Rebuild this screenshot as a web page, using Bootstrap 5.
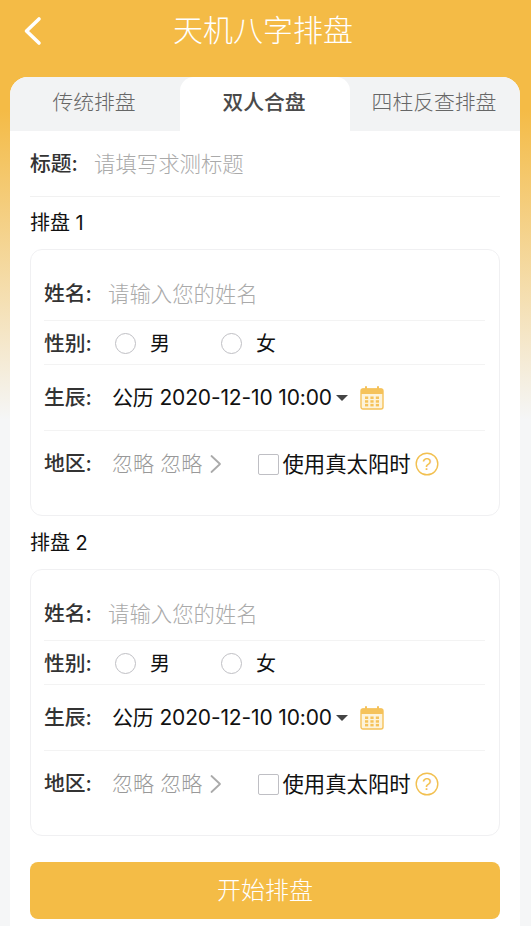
<!DOCTYPE html>
<html lang="zh"><head><meta charset="utf-8"><title>天机八字排盘</title>
<link rel="stylesheet" href="https://cdn.jsdelivr.net/npm/bootstrap@5.3.0/dist/css/bootstrap.min.css">
<style>
html,body{height:926px;overflow:hidden}
body{font-family:"Inter","Noto Sans CJK SC",sans-serif;color:#111;background:linear-gradient(180deg,#f4bb46 0,#f4bb46 110px,#f5f6f7 420px,#f5f6f7 100%)}
.top-bar{height:77px;padding:0 5px 18px 0;position:relative}
.top-bar h1{font-size:30px;font-weight:300;color:#fff;margin:0;line-height:1}
.back-ico{position:absolute;left:22px;top:16px}
.sheet{margin:0 11px 0 10px;background:#fff;border-radius:18px 18px 0 0;height:849px;overflow:hidden}
.tab-row{height:54px;background:#f2f3f4}
.tab-cell{flex:1 1 0;font-size:20.8px;font-weight:300;color:#666;line-height:52px;text-align:center;padding-right:2px}
.tab-cell.on{background:#fff;color:#4a4a4a;font-weight:500;border-radius:14px 14px 0 0}
.sheet-body{padding:0 20px}
.title-row{height:66px;border-bottom:1px solid #f1f1f1;font-size:20px}
.lbl{font-size:20.8px;font-weight:500;color:#333;flex:0 0 auto;white-space:nowrap;width:48px}
.txt-in{border:0;outline:0;padding:2px 0 0;background:transparent;font-size:21.4px;font-weight:300;color:#333;flex:1 1 auto;min-width:0}
.txt-in::placeholder{color:#aaa;opacity:1}
.sec-title{font-size:20px;color:#111;line-height:26px;margin:13px 0 13px;font-weight:400}
.sec-title.next{margin-top:14px}
.form-box{border:1px solid #f0f0f2;border-radius:12px;height:267px;padding:17px 14px 0 13px}
.r1{height:54px;border-bottom:1px solid #f3f3f3}
.r2{height:44px;border-bottom:1px solid #f3f3f3;padding-top:2px}
.r3{height:66px;border-bottom:1px solid #f3f3f3}
.r4{height:66px}
.gap-a{width:16px}
.gap-b{width:23px}
.gap-c{width:20px}
.form-box .form-check-input{margin:0;flex:0 0 auto;border:1.5px solid #bfbfc4;box-shadow:none}
.form-box .rad{width:21px;height:21px}
.rad-txt{font-size:20px;color:#111;margin-left:14px;width:71px;padding-top:1px}
.date-v{font-size:21px;color:#111;white-space:nowrap;letter-spacing:-.15px}
.caret-i{width:0;height:0;border:6px solid transparent;border-top:6px solid #444;border-bottom:0;margin-left:4px}
.cal-i{margin-left:12px}
.grey-v{font-size:21px;font-weight:300;color:#999;letter-spacing:.1px;white-space:nowrap}
.form-box .chk{width:21px;height:21px;border-radius:2px;margin-left:36px}
.sun-t{font-size:21.4px;font-weight:400;color:#111;white-space:nowrap;margin-left:3px}
.go-btn{display:block;width:100%;height:57px;margin-top:26px;border:0;border-radius:8px;background:#f4bc46;color:#fff;font-size:24px;font-weight:300;line-height:1}
.go-btn:hover,.go-btn:active{background:#f4bc46!important;color:#fff!important}
</style></head>
<body>
<header class="top-bar d-flex align-items-center justify-content-center">
<svg class="back-ico" width="20" height="30" viewBox="0 0 20 30" fill="none"><path d="M17 3 L4.5 15 L17 27" stroke="#fff" stroke-width="3.6" stroke-linecap="round" stroke-linejoin="round"/></svg>
<h1>天机八字排盘</h1>
</header>
<main class="sheet">
<div class="tab-row d-flex">
<div class="tab-cell">传统排盘</div>
<div class="tab-cell on">双人合盘</div>
<div class="tab-cell">四柱反查排盘</div>
</div>
<div class="sheet-body">
<div class="title-row d-flex align-items-center">
<span class="lbl">标题:</span><span class="gap-a"></span><input class="txt-in" type="text" placeholder="请填写求测标题">
</div>

<div class="sec-title">排盘 1</div>
<section class="form-box">
<div class="r1 d-flex align-items-center"><span class="lbl">姓名:</span><span class="gap-a"></span><input class="txt-in" type="text" placeholder="请输入您的姓名"></div>
<div class="r2 d-flex align-items-center"><span class="lbl">性别:</span><span class="gap-b"></span>
<input class="form-check-input rad" type="radio" name="a"><span class="rad-txt">男</span>
<input class="form-check-input rad" type="radio" name="a"><span class="rad-txt">女</span></div>
<div class="r3 d-flex align-items-center"><span class="lbl">生辰:</span><span class="gap-c"></span><span class="date-v">公历 2020-12-10 10:00</span><span class="caret-i"></span>
<svg class="cal-i" width="24" height="24" viewBox="0 0 24 24"><rect x="1" y="3" width="22" height="20" rx="2" fill="#fdf3da" stroke="#f5c25a" stroke-width="1.4"/><path d="M1 4.5a2 2 0 0 1 2-2h18a2 2 0 0 1 2 2V8H1z" fill="#f5c25a"/><path d="M6 1v4M18 1v4" stroke="#f5c25a" stroke-width="2" stroke-linecap="round"/><g fill="#f5c25a"><rect x="5" y="10.5" width="3.2" height="2.5"/><rect x="10.4" y="10.5" width="3.2" height="2.5"/><rect x="15.8" y="10.5" width="3.2" height="2.5"/><rect x="5" y="14.2" width="3.2" height="2.5"/><rect x="10.4" y="14.2" width="3.2" height="2.5"/><rect x="15.8" y="14.2" width="3.2" height="2.5"/><rect x="5" y="17.9" width="3.2" height="2.5"/><rect x="10.4" y="17.9" width="3.2" height="2.5"/><rect x="15.8" y="17.9" width="3.2" height="2.5"/></g></svg></div>
<div class="r4 d-flex align-items-center"><span class="lbl">地区:</span><span class="gap-c"></span><span class="grey-v">忽略 忽略</span>
<svg class="ms-2" width="12" height="20" viewBox="0 0 12 20" fill="none"><path d="M1.5 2 L10 10 L1.5 18" stroke="#aaa" stroke-width="1.8" stroke-linecap="round" stroke-linejoin="round"/></svg>
<input class="form-check-input chk" type="checkbox"><span class="sun-t">使用真太阳时</span>
<svg class="ms-1" width="24" height="24" viewBox="0 0 24 24" fill="none"><circle cx="12" cy="12" r="10.8" stroke="#f2c050" stroke-width="1.4"/><text x="12" y="18" text-anchor="middle" font-size="17" fill="#f2c050" font-family="Liberation Sans">?</text></svg></div>
</section>

<div class="sec-title next">排盘 2</div>
<section class="form-box">
<div class="r1 d-flex align-items-center"><span class="lbl">姓名:</span><span class="gap-a"></span><input class="txt-in" type="text" placeholder="请输入您的姓名"></div>
<div class="r2 d-flex align-items-center"><span class="lbl">性别:</span><span class="gap-b"></span>
<input class="form-check-input rad" type="radio" name="b"><span class="rad-txt">男</span>
<input class="form-check-input rad" type="radio" name="b"><span class="rad-txt">女</span></div>
<div class="r3 d-flex align-items-center"><span class="lbl">生辰:</span><span class="gap-c"></span><span class="date-v">公历 2020-12-10 10:00</span><span class="caret-i"></span>
<svg class="cal-i" width="24" height="24" viewBox="0 0 24 24"><rect x="1" y="3" width="22" height="20" rx="2" fill="#fdf3da" stroke="#f5c25a" stroke-width="1.4"/><path d="M1 4.5a2 2 0 0 1 2-2h18a2 2 0 0 1 2 2V8H1z" fill="#f5c25a"/><path d="M6 1v4M18 1v4" stroke="#f5c25a" stroke-width="2" stroke-linecap="round"/><g fill="#f5c25a"><rect x="5" y="10.5" width="3.2" height="2.5"/><rect x="10.4" y="10.5" width="3.2" height="2.5"/><rect x="15.8" y="10.5" width="3.2" height="2.5"/><rect x="5" y="14.2" width="3.2" height="2.5"/><rect x="10.4" y="14.2" width="3.2" height="2.5"/><rect x="15.8" y="14.2" width="3.2" height="2.5"/><rect x="5" y="17.9" width="3.2" height="2.5"/><rect x="10.4" y="17.9" width="3.2" height="2.5"/><rect x="15.8" y="17.9" width="3.2" height="2.5"/></g></svg></div>
<div class="r4 d-flex align-items-center"><span class="lbl">地区:</span><span class="gap-c"></span><span class="grey-v">忽略 忽略</span>
<svg class="ms-2" width="12" height="20" viewBox="0 0 12 20" fill="none"><path d="M1.5 2 L10 10 L1.5 18" stroke="#aaa" stroke-width="1.8" stroke-linecap="round" stroke-linejoin="round"/></svg>
<input class="form-check-input chk" type="checkbox"><span class="sun-t">使用真太阳时</span>
<svg class="ms-1" width="24" height="24" viewBox="0 0 24 24" fill="none"><circle cx="12" cy="12" r="10.8" stroke="#f2c050" stroke-width="1.4"/><text x="12" y="18" text-anchor="middle" font-size="17" fill="#f2c050" font-family="Liberation Sans">?</text></svg></div>
</section>
<button class="btn go-btn" type="button">开始排盘</button>
</div>
</main>
<script src="https://cdn.jsdelivr.net/npm/bootstrap@5.3.0/dist/js/bootstrap.bundle.min.js"></script>
</body></html>
